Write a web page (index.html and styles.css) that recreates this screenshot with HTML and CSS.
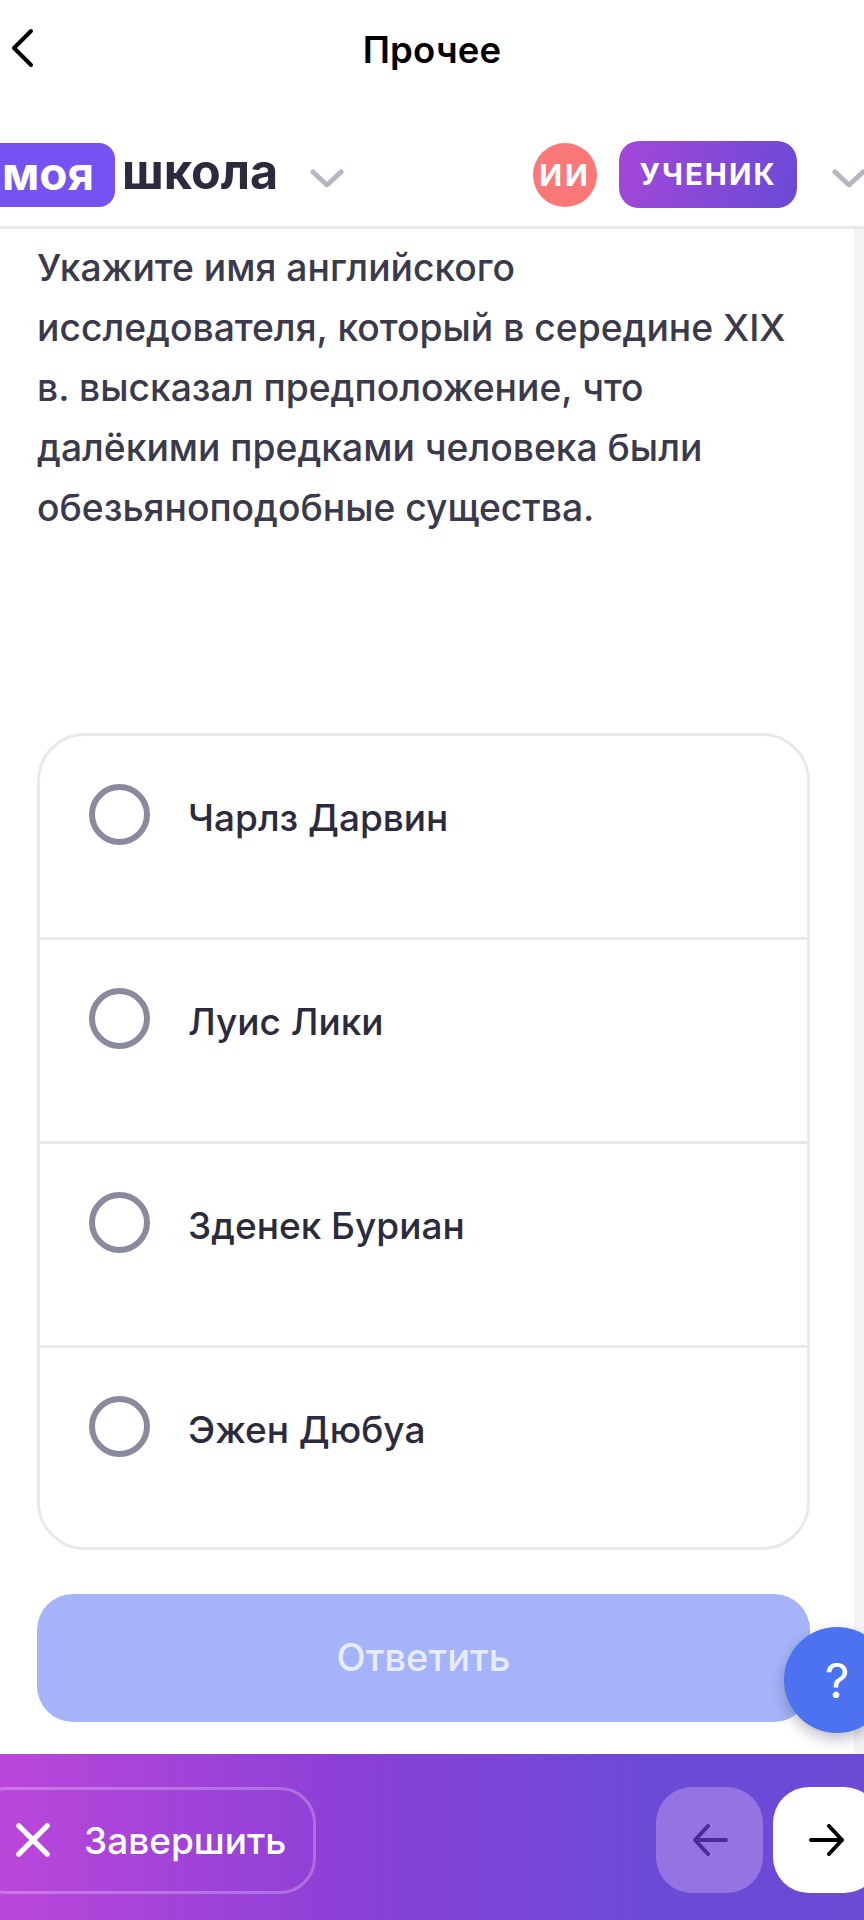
FILE: index.html
```html
<!DOCTYPE html>
<html lang="ru">
<head>
<meta charset="utf-8">
<title>Прочее</title>
<link rel="stylesheet" href="styles.css">
</head>
<body>
<div class="app">
  <nav class="nav">
    <svg class="nav-back" width="24" height="40" viewBox="0 0 24 40"><path d="M21 3 L4 20 L21 37" fill="none" stroke="#000" stroke-width="4" stroke-linecap="round" stroke-linejoin="round"/></svg>
    <h1 class="nav-title">Прочее</h1>
  </nav>
  <header class="topbar">
    <div class="logo"><span class="logo-box">моя</span><span class="logo-word">школа</span></div>
    <svg class="chev chev-logo" width="34" height="20" viewBox="0 0 34 20"><path d="M3 3 L17 16 L31 3" fill="none" stroke="#b6b6c2" stroke-width="5" stroke-linecap="round" stroke-linejoin="round"/></svg>
    <div class="avatar">ИИ</div>
    <div class="role">УЧЕНИК</div>
    <svg class="chev chev-role" width="34" height="20" viewBox="0 0 34 20"><path d="M3 3 L17 16 L31 3" fill="none" stroke="#b6b6c2" stroke-width="5" stroke-linecap="round" stroke-linejoin="round"/></svg>
  </header>
  <main class="main">
    <div class="content">
      <p class="question">Укажите имя английского исследователя, который в середине XIX в. высказал предположение, что далёкими предками человека были обезьяноподобные существа.</p>
      <ul class="options">
        <li class="option"><span class="radio"></span><span class="option-text">Чарлз Дарвин</span></li>
        <li class="option"><span class="radio"></span><span class="option-text">Луис Лики</span></li>
        <li class="option"><span class="radio"></span><span class="option-text">Зденек Буриан</span></li>
        <li class="option"><span class="radio"></span><span class="option-text">Эжен Дюбуа</span></li>
      </ul>
      <button class="answer" type="button">Ответить</button>
    </div>
    <div class="scrollbar"></div>
    <div class="help">?</div>
  </main>
  <footer class="footer">
    <div class="finish">
      <svg width="34" height="34" viewBox="0 0 36 36"><path d="M3 3 L33 33 M33 3 L3 33" fill="none" stroke="#fff" stroke-width="5.5" stroke-linecap="round"/></svg>
      <span>Завершить</span>
    </div>
    <div class="arrows">
      <div class="arrow arrow-prev"><svg width="36" height="32" viewBox="0 0 36 32"><path d="M34 16 H3 M16 2 L3 16 L16 30" fill="none" stroke="#4a2a9c" stroke-width="4" stroke-linecap="round" stroke-linejoin="round"/></svg></div>
      <div class="arrow arrow-next"><svg width="36" height="32" viewBox="0 0 36 32"><path d="M2 16 H33 M20 2 L33 16 L20 30" fill="none" stroke="#000" stroke-width="4" stroke-linecap="round" stroke-linejoin="round"/></svg></div>
    </div>
  </footer>
</div>
</body>
</html>
```
FILE: styles.css
```css
* { box-sizing: border-box; }
html, body { margin: 0; padding: 0; background: #fff; }
body { font-family: Inter, "Noto Sans", sans-serif; color: #2b2b3d; }
.app { width: 864px; height: 1920px; display: flex; flex-direction: column; overflow: hidden; }

.nav { height: 100px; flex: none; display: flex; align-items: center; justify-content: center; position: relative; }
.nav-back { position: absolute; left: 10px; top: 28px; }
.nav-title { margin: 0; font-size: 36.5px; font-weight: 600; color: #000; letter-spacing: .2px; }

.topbar { height: 129px; flex: none; display: flex; align-items: center; border-bottom: 3px solid #e9e9ec; padding-top: 24px; }
.logo { display: flex; align-items: center; margin-left: -14px; gap: 7px; }
.logo-box { width: 129px; height: 64px; background: #7652f2; border-radius: 0 16px 16px 0; color: #fff; font-size: 46px; font-weight: 700; display: flex; align-items: center; padding-left: 16px; line-height: 1; padding-bottom: 4px; }
.logo-word { font-size: 48.5px; font-weight: 700; color: #2b2b3d; line-height: 1; padding-bottom: 6px; }
.chev { flex: none; }
.chev-logo { margin-left: 32px; margin-top: 8px; }
.avatar { width: 64px; height: 64px; margin-left: 189px; border-radius: 50%; background: #fb7878; color: #fff; font-size: 30px; font-weight: 700; letter-spacing: 3px; display: flex; align-items: center; justify-content: center; flex: none; }
.role { width: 178px; height: 67px; margin-left: 22px; margin-bottom: 2px; border-radius: 20px; background: linear-gradient(100deg, #a447d8, #6a4ad6); color: #fff; font-size: 29.5px; font-weight: 700; letter-spacing: 2px; display: flex; align-items: center; justify-content: center; flex: none; }
.chev-role { margin-left: 35px; margin-top: 8px; }

.main { flex: 1; min-height: 0; display: flex; position: relative; }
.content { flex: 1; padding: 9px 0 0 37px; }
.scrollbar { width: 10px; background: #f4f4f6; }
.question { margin: 0; width: 770px; font-size: 37.25px; line-height: 60px; font-weight: 450; color: #3a3a4c; height: 495px; }
.options { list-style: none; margin: 0; padding: 0; width: 773px; height: 817px; border: 3px solid #e9e9ec; border-radius: 48px; }
.option { height: 204px; padding: 48px 0 0 49px; display: flex; align-items: flex-start; gap: 38px; border-bottom: 3px solid #e9e9ec; }
.option:last-child { border-bottom: 0; }
.radio { width: 61px; height: 61px; border: 6px solid #8a8a9e; border-radius: 50%; flex: none; }
.option-text { font-size: 37px; line-height: 61px; padding-top: 3px; font-weight: 450; color: #2b2b3d; }
.answer { display: block; margin: 44px 0 0; width: 773px; height: 128px; padding: 0 0 3px; border: 0; border-radius: 36px; background: #a5b4f8; color: #e8ebfb; font: 500 38px Inter, sans-serif; }
.help { position: absolute; left: 784px; top: 1398px; width: 106px; height: 106px; border-radius: 50%; background: #4d72f0; color: #fff; font-size: 48px; font-weight: 400; display: flex; align-items: center; justify-content: center; box-shadow: 0 6px 14px rgba(40, 40, 80, .3); }

.footer { height: 166px; flex: none; padding-top: 6px; background: linear-gradient(90deg, #ba47da 0%, #8b40d6 40%, #6c4ad6 75%, #6b4ad4 100%); display: flex; align-items: center; justify-content: space-between; }
.finish { margin-left: -30px; width: 346px; height: 107px; border: 3px solid rgba(255,255,255,.25); border-radius: 36px; display: flex; align-items: center; gap: 34px; padding-left: 43px; color: #fff; font-size: 37px; font-weight: 450; }
.arrows { display: flex; gap: 10px; margin-right: -16px; }
.arrow { width: 107px; height: 106px; border-radius: 36px; display: flex; align-items: center; justify-content: center; }
.arrow-prev { background: #9474e2; }
.arrow-next { background: #fff; }
```
